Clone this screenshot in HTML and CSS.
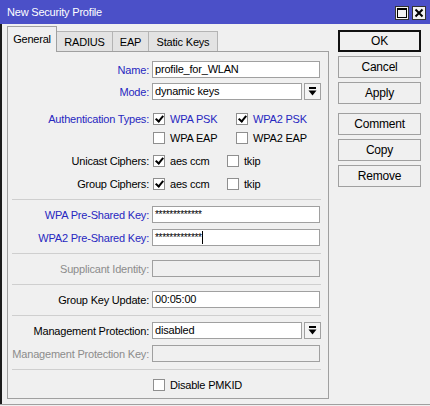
FILE: index.html
```html
<!DOCTYPE html>
<html lang="en">
<head>
<meta charset="UTF-8">
<title>New Security Profile</title>
<link rel="stylesheet" href="styles.css">
</head>
<body>
<div class="window">
    <div class="titlebar">
        <span class="title">New Security Profile</span>
        <div class="controls">
            <span class="ctl">
                <svg width="10" height="10" viewBox="0 0 10 10"><rect x="0.5" y="0.5" width="9" height="9" fill="none" stroke="#000" stroke-width="1"/><rect x="0" y="0" width="10" height="2" fill="#000"/></svg>
            </span>
            <span class="ctl">
                <svg width="10" height="10" viewBox="0 0 10 10"><path d="M1.5 1.5 L8.5 8.5 M8.5 1.5 L1.5 8.5" stroke="#000" stroke-width="2"/></svg>
            </span>
        </div>
    </div>

    <div class="main">
        <div class="left">
            <div class="tabs">
                <div class="tab active t-general">General</div>
                <div class="tab t-radius">RADIUS</div>
                <div class="tab t-eap">EAP</div>
                <div class="tab t-static">Static Keys</div>
            </div>
            <div class="panel">
                <div class="row first">
                    <label class="lbl blue">Name:</label>
                    <div class="input">profile_for_WLAN</div>
                </div>
                <div class="row">
                    <label class="lbl blue">Mode:</label>
                    <div class="input select">dynamic keys</div>
                    <span class="drop"><svg width="9" height="9" viewBox="0 0 9 9"><rect x="1" y="0" width="7" height="2" fill="#000"/><path d="M0.5 3.5 H8.5 L4.5 8.5 Z" fill="#000"/></svg></span>
                </div>
                <div class="row auth1">
                    <label class="lbl blue">Authentication Types:</label>
                    <span class="check col-a"><span class="box on"></span><span class="blue">WPA PSK</span></span>
                    <span class="check"><span class="box on"></span><span class="blue">WPA2 PSK</span></span>
                </div>
                <div class="row auth2">
                    <label class="lbl"></label>
                    <span class="check col-a"><span class="box"></span>WPA EAP</span>
                    <span class="check"><span class="box"></span>WPA2 EAP</span>
                </div>
                <div class="row gap6">
                    <label class="lbl">Unicast Ciphers:</label>
                    <span class="check col-b"><span class="box on"></span>aes ccm</span>
                    <span class="check"><span class="box"></span>tkip</span>
                </div>
                <div class="row gap6">
                    <label class="lbl">Group Ciphers:</label>
                    <span class="check col-b"><span class="box on"></span>aes ccm</span>
                    <span class="check"><span class="box"></span>tkip</span>
                </div>
                <div class="sep"></div>
                <div class="row flat">
                    <label class="lbl blue">WPA Pre-Shared Key:</label>
                    <div class="input pass">*************</div>
                </div>
                <div class="row gap6">
                    <label class="lbl blue">WPA2 Pre-Shared Key:</label>
                    <div class="input pass">*************<span class="caret"></span></div>
                </div>
                <div class="sep"></div>
                <div class="row flat">
                    <label class="lbl gray">Supplicant Identity:</label>
                    <div class="input off"></div>
                </div>
                <div class="sep"></div>
                <div class="row flat">
                    <label class="lbl">Group Key Update:</label>
                    <div class="input">00:05:00</div>
                </div>
                <div class="sep"></div>
                <div class="row flat">
                    <label class="lbl">Management Protection:</label>
                    <div class="input select">disabled</div>
                    <span class="drop"><svg width="9" height="9" viewBox="0 0 9 9"><rect x="1" y="0" width="7" height="2" fill="#000"/><path d="M0.5 3.5 H8.5 L4.5 8.5 Z" fill="#000"/></svg></span>
                </div>
                <div class="row gap6">
                    <label class="lbl gray">Management Protection Key:</label>
                    <div class="input off"></div>
                </div>
                <div class="sep"></div>
                <div class="row flat">
                    <label class="lbl"></label>
                    <span class="check"><span class="box"></span>Disable PMKID</span>
                </div>
            </div>
        </div>

        <div class="buttons">
            <button class="btn ok">OK</button>
            <button class="btn">Cancel</button>
            <button class="btn">Apply</button>
            <button class="btn spaced">Comment</button>
            <button class="btn">Copy</button>
            <button class="btn">Remove</button>
        </div>
    </div>
</div>
</body>
</html>
```

FILE: styles.css
```css
html, body {
    margin: 0;
    padding: 0;
}

body {
    width: 430px;
    height: 406px;
    background-color: #f0f0f0;
    font-family: "Liberation Sans", Arial, sans-serif;
    font-size: 11px;
    letter-spacing: -0.2px;
    color: #000;
    overflow: hidden;
}

.window {
    height: 404px;
    border-bottom: 1px solid #a0a0a0;
}

.titlebar {
    height: 24px;
    background-color: #4b50c8;
    display: flex;
    align-items: center;
    justify-content: space-between;
    padding: 0 4px 0 7px;
}

.title {
    color: #fff;
    font-size: 11px;
}

.controls {
    display: flex;
    gap: 3px;
    padding-top: 1px;
}

.ctl {
    width: 12px;
    height: 12px;
    border: 1px solid #333;
    background-color: #f2f2f2;
    display: flex;
    align-items: center;
    justify-content: center;
}

.main {
    display: flex;
    height: 380px;
    border-left: 2px solid #1c1c1c;
}

.left {
    margin-left: 5px;
    width: 322px;
    padding-top: 2px;
}

.tabs {
    display: flex;
    align-items: flex-end;
    height: 25px;
}

.tab {
    height: 20px;
    line-height: 20px;
    text-align: center;
    background-color: #e3e3e3;
    border: 1px solid #b4b4b4;
    border-left: none;
    border-bottom: none;
    box-sizing: border-box;
}

.tab.active {
    height: 26px;
    line-height: 24px;
    background-color: #f0f0f0;
    border-left: 1px solid #a0a0a0;
    border-color: #a0a0a0;
    margin-bottom: -1px;
    position: relative;
    z-index: 1;
}

.t-general { width: 50px; }
.t-radius { width: 56px; }
.t-eap { width: 36px; }
.t-static { width: 69px; }

.panel {
    border: 1px solid #a0a0a0;
    height: 348px;
    box-sizing: border-box;
    padding-top: 9px;
}

.row {
    display: flex;
    align-items: center;
    height: 17px;
    margin-top: 5px;
}

.row.first {
    margin-top: 0;
}

.row.auth1 {
    margin-top: 10px;
}

.row.auth2 {
    margin-top: 2px;
}

.row.gap6 {
    margin-top: 6px;
}

.row.flat {
    margin-top: 0;
}

.lbl {
    width: 141px;
    text-align: right;
    margin-right: 3px;
    flex-shrink: 0;
    white-space: nowrap;
}

.blue {
    color: #2727c0;
}

.gray {
    color: #8c8c8c;
}

.input {
    width: 168px;
    height: 17px;
    box-sizing: border-box;
    border: 1px solid #a0a0a0;
    background-color: #fff;
    padding: 0 2px;
    line-height: 15px;
    white-space: nowrap;
    overflow: hidden;
}

.input.select {
    width: 150px;
}

.input.off {
    background-color: #f0f0f0;
}

.input.pass {
    font-size: 10px;
    letter-spacing: -0.3px;
}

.caret {
    display: inline-block;
    width: 1px;
    height: 13px;
    background-color: #000;
    vertical-align: top;
    margin-top: 1px;
}

.drop {
    width: 17px;
    height: 17px;
    box-sizing: border-box;
    border: 1px solid #a0a0a0;
    background-color: #f4f4f4;
    margin-left: 2px;
    display: flex;
    align-items: center;
    justify-content: center;
}

.check {
    display: flex;
    align-items: center;
    margin-left: 1px;
}

.check.col-a {
    width: 82px;
}

.check.col-b {
    width: 73px;
}

.box {
    width: 12px;
    height: 12px;
    box-sizing: border-box;
    border: 1px solid #8f8f8f;
    background-color: #fff;
    margin-right: 5px;
    position: relative;
}

.box.on::after {
    content: "";
    position: absolute;
    left: 3px;
    top: 0px;
    width: 3px;
    height: 6px;
    border-right: 2px solid #000;
    border-bottom: 2px solid #000;
    transform: rotate(40deg);
}

.sep {
    height: 1px;
    background-color: #cfcfcf;
    margin: 7px 7px 6px 4px;
}

.buttons {
    margin-left: 9px;
    width: 83px;
    padding-top: 6px;
    display: flex;
    flex-direction: column;
    gap: 4px;
}

.btn {
    height: 22px;
    box-sizing: border-box;
    border: 1px solid #a0a0a0;
    background-color: #f0f0f0;
    font-family: inherit;
    font-size: 12px;
    letter-spacing: -0.2px;
    color: #000;
    padding: 0;
}

.btn.ok {
    border: 2px solid #111;
}

.btn.spaced {
    margin-top: 5px;
}
```
